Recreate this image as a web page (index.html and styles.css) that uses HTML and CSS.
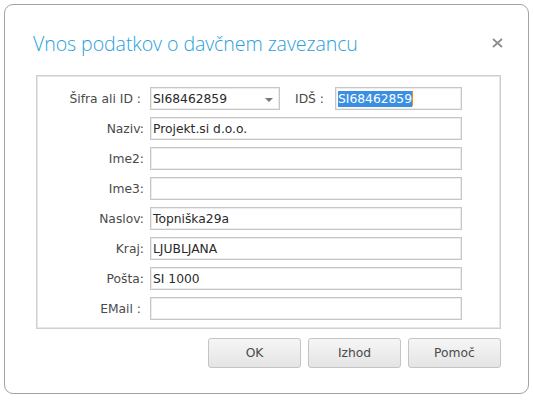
FILE: index.html
```html
<!DOCTYPE html>
<html lang="sl">
<head>
<meta charset="utf-8">
<title>Vnos podatkov o davčnem zavezancu</title>
<link rel="stylesheet" href="styles.css">
</head>
<body>
<div class="dialog">
  <div class="header">
    <h1 class="title">Vnos podatkov o davčnem zavezancu</h1>
    <svg class="close" width="11" height="10" viewBox="0 0 11 10"><path d="M1 1 L10 9 M10 1 L1 9" stroke="#8e8e8e" stroke-width="1.8" fill="none"/></svg>
  </div>
  <div class="panel">
    <div class="row">
      <label class="lbl sp">Šifra ali ID :</label>
      <div class="field combo"><span class="val">SI68462859</span><span class="arrow"></span></div>
      <label class="lbl2">IDŠ :</label>
      <div class="field ids"><span class="sel">SI68462859</span><span class="caret"></span></div>
    </div>
    <div class="row">
      <label class="lbl">Naziv:</label>
      <div class="field wide"><span class="val">Projekt.si d.o.o.</span></div>
    </div>
    <div class="row">
      <label class="lbl">Ime2:</label>
      <div class="field wide"></div>
    </div>
    <div class="row">
      <label class="lbl">Ime3:</label>
      <div class="field wide"></div>
    </div>
    <div class="row">
      <label class="lbl">Naslov:</label>
      <div class="field wide"><span class="val">Topniška29a</span></div>
    </div>
    <div class="row">
      <label class="lbl">Kraj:</label>
      <div class="field wide"><span class="val">LJUBLJANA</span></div>
    </div>
    <div class="row">
      <label class="lbl">Pošta:</label>
      <div class="field wide"><span class="val">SI 1000</span></div>
    </div>
    <div class="row">
      <label class="lbl sp">EMail :</label>
      <div class="field wide"></div>
    </div>
  </div>
  <div class="buttons">
    <button class="btn">OK</button>
    <button class="btn">Izhod</button>
    <button class="btn">Pomoč</button>
  </div>
</div>
</body>
</html>
```

FILE: styles.css
```css
html, body {
  margin: 0;
  padding: 0;
  background: #ffffff;
}
body {
  font-family: "DejaVu Sans", Tahoma, sans-serif;
  font-size: 12.3px;
  color: #4a4a4a;
}
.dialog {
  box-sizing: border-box;
  margin: 4px 0 0 4px;
  width: 525px;
  height: 390px;
  border: 1px solid #a3a3a3;
  border-radius: 9px;
  background: #ffffff;
}
.header {
  display: flex;
  align-items: center;
  justify-content: space-between;
  height: 70px;
  padding: 0 25px 0 28px;
}
.title {
  margin: 0;
  padding-top: 6px;
  font-family: "Open Sans", sans-serif;
  font-weight: 300;
  font-size: 19.6px;
  color: #2a9fdc;
  letter-spacing: -0.1px;
}
.close {
  display: block;
  margin-top: 5px;
}
.panel {
  box-sizing: border-box;
  margin-left: 31px;
  width: 465px;
  height: 254px;
  border: 1px solid #cfcfcf;
  box-shadow: inset 0 0 0 1px #e6e6e6;
  padding: 11px 0 0 0;
  display: flex;
  flex-direction: column;
  gap: 7px;
}
.row {
  display: flex;
  align-items: center;
  height: 23px;
}
.lbl {
  width: 107px;
  text-align: right;
  flex: none;
  margin-right: 6px;
}
.lbl.sp {
  padding-right: 3px;
  box-sizing: border-box;
}
.field {
  box-sizing: border-box;
  height: 23px;
  border: 1px solid #c6c6c6;
  box-shadow: inset 0 0 0 1px #ececec;
  display: flex;
  align-items: center;
  padding-left: 2px;
  color: #2a2a2a;
  background: #fff;
}
.wide {
  width: 312px;
}
.combo {
  width: 130px;
  position: relative;
}
.arrow {
  position: absolute;
  right: 6px;
  top: 10px;
  width: 0;
  height: 0;
  border-left: 4px solid transparent;
  border-right: 4px solid transparent;
  border-top: 4px solid #777;
}
.lbl2 {
  margin-left: 15px;
  width: 40px;
  flex: none;
}
.ids {
  width: 127px;
}
.sel {
  background: #3a8fe3;
  color: #ffffff;
  padding: 1px 0;
}
.caret {
  width: 1px;
  height: 15px;
  background: #f08a24;
}
.buttons {
  display: flex;
  justify-content: flex-end;
  gap: 7px;
  padding: 9px 27px 0 0;
}
.btn {
  box-sizing: border-box;
  width: 93px;
  height: 30px;
  border: 1px solid #c4c4c4;
  border-radius: 3px;
  background: linear-gradient(#f6f6f6, #e4e4e4);
  font-family: "DejaVu Sans", Tahoma, sans-serif;
  font-weight: 400;
  font-size: 12.3px;
  color: #4a4a4a;
  padding: 0;
}
```
